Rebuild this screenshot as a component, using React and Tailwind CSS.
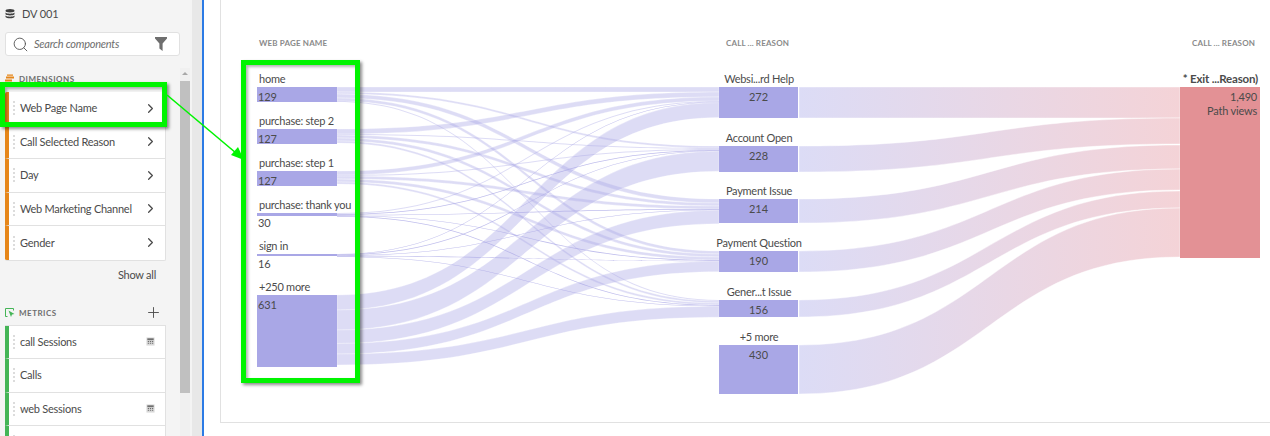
import { ChevronRight, Plus, Search } from 'lucide-react';

const FONT = { fontFamily: 'Lato, "Noto Sans", sans-serif' };

const dimensions = ['Web Page Name', 'Call Selected Reason', 'Day', 'Web Marketing Channel', 'Gender'];
const metrics = [
  { label: 'call Sessions', calc: true },
  { label: 'Calls', calc: false },
  { label: 'web Sessions', calc: true },
  { label: '', calc: false },
];

const leftNodes = [
  { label: 'home', value: '129', top: 87, h: 15 },
  { label: 'purchase: step 2', value: '127', top: 129, h: 15 },
  { label: 'purchase: step 1', value: '127', top: 171, h: 15 },
  { label: 'purchase: thank you', value: '30', top: 213, h: 3 },
  { label: 'sign in', value: '16', top: 254, h: 2 },
  { label: '+250 more', value: '631', top: 295, h: 72 },
];

const midNodes = [
  { label: 'Websi...rd Help', value: '272', top: 87, h: 31, exitTop: 87 },
  { label: 'Account Open', value: '228', top: 146, h: 26, exitTop: 118 },
  { label: 'Payment Issue', value: '214', top: 199, h: 24, exitTop: 145 },
  { label: 'Payment Question', value: '190', top: 251, h: 21, exitTop: 169 },
  { label: 'Gener...t Issue', value: '156', top: 300, h: 17, exitTop: 191 },
  { label: '+5 more', value: '430', top: 345, h: 49, exitTop: 208 },
];

// band widths: one row per left node, one column per middle node
const matrix = [
  [5, 2, 4, 3, 1],
  [5, 1, 3, 3, 2],
  [4, 1, 3, 3, 2],
  [1, 0.7, 0.7, 0.7, 0.7],
  [0.6, 0.6, 0.6, 0.6, 0.6],
  [15, 20, 13.5, 10.5, 11],
];

function band(x0, y0, x1, y1, w) {
  const c = (x0 + x1) / 2;
  return `M${x0} ${y0} C${c} ${y0} ${c} ${y1} ${x1} ${y1} L${x1} ${y1 + w} C${c} ${y1 + w} ${c} ${y0 + w} ${x0} ${y0 + w} Z`;
}

function buildLinks() {
  const targetOffset = [0, 0, 0, 0, 0];
  const links = [];
  matrix.forEach((row, s) => {
    let sourceOffset = 0;
    row.forEach((w, t) => {
      links.push({ s, t, w, y0: leftNodes[s].top + sourceOffset, y1: midNodes[t].top + targetOffset[t] });
      sourceOffset += w;
      targetOffset[t] += w;
    });
  });
  return links;
}

function DragDots() {
  return <span className="mr-[5px] h-[14px] w-[2px] shrink-0 border-l-2 border-dotted border-[#dcdcdc]" />;
}

function CalcIcon() {
  return (
    <svg width="9" height="9" viewBox="0 0 10 10" className="shrink-0">
      <rect x="0.5" y="0.5" width="9" height="9" fill="#d8d8d8" />
      <rect x="1.5" y="1.5" width="7" height="2" fill="#6e6e6e" />
      <path d="M2 5h1.4M4.3 5h1.4M6.6 5h1.4M2 7h1.4M4.3 7h1.4M6.6 7h1.4" stroke="#6e6e6e" strokeWidth="1.2" />
    </svg>
  );
}

function SideRow({ label, tone, right, last }) {
  return (
    <div className={`flex h-[33.5px] items-center bg-white pl-[4px] ${tone} border-l-4 ${last ? '' : 'border-b border-b-[#e1e1e1]'}`}>
      <DragDots />
      <span className="flex-1 whitespace-nowrap text-[11px] tracking-[-0.25px] text-[#4b4b4b]">{label}</span>
      <span className="flex w-[30px] justify-center">{right}</span>
    </div>
  );
}

function Sidebar() {
  return (
    <aside className="flex h-full w-[192px] shrink-0 bg-[#f4f4f4]">
      <div className="w-[180px] shrink-0 pl-[5px]">
        <div className="flex h-[28px] items-center">
          <svg width="10" height="10" viewBox="0 0 10 10" className="mr-[7px]">
            <ellipse cx="5" cy="1.8" rx="4.5" ry="1.7" fill="#3f3f3f" />
            <path d="M0.5 3.6c1 1.6 8 1.6 9 0v1.6c-1 1.6-8 1.6-9 0zM0.5 6.6c1 1.6 8 1.6 9 0v1.4c-1 1.8-8 1.8-9 0z" fill="#3f3f3f" />
          </svg>
          <span className="text-[11px] tracking-[-0.1px] text-[#4b4b4b]">DV 001</span>
        </div>
        <div className="mt-[4px] flex h-[24px] w-[175px] items-center rounded-[3px] border border-[#e1e1e1] bg-white pl-[6px] pr-[12px]">
          <Search size={17} strokeWidth={1.3} className="text-[#555]" />
          <span className="ml-[5px] flex-1 text-[11px] italic tracking-[-0.25px] text-[#6e6e6e]">Search components</span>
          <svg width="12" height="14" viewBox="0 0 12 14">
            <path d="M0 0h12v1.6L7.6 6.4V14L4.4 11.6V6.4L0 1.6z" fill="#6e6e6e" />
          </svg>
        </div>
        <div className="mt-[17px] flex h-[12px] items-center">
          <svg width="10" height="10" viewBox="0 0 10 10" className="mr-[4px]">
            <path d="M1 2.5h8v2H1zM0 5.5h7v2H0zM2 0.5h6v1.2H2z" fill="#e68619" />
          </svg>
          <span className="text-[8px] font-bold tracking-[0.5px] text-[#6e6e6e]">DIMENSIONS</span>
        </div>
        <div className="mt-[7px] w-[161px] overflow-hidden rounded-[2px] border-b border-r border-[#e1e1e1]">
          {dimensions.map((d, i) => (
            <SideRow
              key={d}
              label={d}
              tone="border-l-[#e68619]"
              last={i === dimensions.length - 1}
              right={<ChevronRight size={15} strokeWidth={2} className="text-[#4b4b4b]" />}
            />
          ))}
        </div>
        <div className="mt-[6px] w-[151px] text-right text-[11px] leading-[16px] tracking-[-0.25px] text-[#4b4b4b]">Show all</div>
        <div className="mt-[24px] flex h-[12px] w-[157px] items-center">
          <svg width="10" height="10" viewBox="0 0 10 10" className="mr-[4px]">
            <path d="M0.5 0.5h8v2M0.5 0.5v8h2" fill="none" stroke="#44b556" />
            <path d="M3.5 2.5l6 3.5-2.5.6-1 2.4z" fill="#44b556" />
          </svg>
          <span className="flex-1 text-[8px] font-bold tracking-[0.5px] text-[#6e6e6e]">METRICS</span>
          <Plus size={17} strokeWidth={1.3} className="text-[#4b4b4b]" />
        </div>
        <div className="mt-[6px] w-[161px] border-r border-t border-[#e1e1e1]">
          {metrics.map((m) => (
            <SideRow key={m.label || 'next'} label={m.label} tone="border-l-[#44b556]" right={m.calc ? <CalcIcon /> : null} />
          ))}
        </div>
      </div>
      <div className="flex flex-1 flex-col pt-[68px]">
        <div className="h-[13px] w-[10px] bg-[#f0f0f0] pt-[4px]">
          <div className="mx-auto h-0 w-0 border-x-[3.5px] border-b-[3px] border-x-transparent border-b-[#a8a8a8]" />
        </div>
        <div className="h-[312px] w-[10px] bg-[#c0c0c0]" />
        <div className="w-[10px] flex-1 bg-[#f0f0f0]" />
      </div>
    </aside>
  );
}

function ColumnTitle({ x, children }) {
  return (
    <div className="absolute top-[37px] whitespace-nowrap text-[8px] font-bold leading-[12px] tracking-[0.15px] text-[#8a8a8a]" style={{ left: x - 221 }}>
      {children}
    </div>
  );
}

function Node({ node, left }) {
  return (
    <>
      <div className="absolute h-[14px] whitespace-nowrap text-[11px] leading-[14px] tracking-[-0.25px] text-[#4b4b4b]" style={{ left: left ? 38 : 498 - 30, width: left ? undefined : 140, top: node.top - 15, textAlign: left ? 'left' : 'center' }}>
        {node.label}
      </div>
      <div className="absolute bg-[#a9a7e6]" style={{ left: left ? 36 : 498, width: left ? 80 : 79, top: node.top, height: node.h }} />
      <div className="absolute text-[11px] leading-[14px] tracking-[-0.1px] text-[#4b4b4b]" style={{ left: left ? 37 : 498, width: left ? undefined : 79, top: node.top + 3, textAlign: left ? 'left' : 'center' }}>
        {node.value}
      </div>
    </>
  );
}

function Sankey() {
  const links = buildLinks();
  return (
    <div className="relative h-full w-full border-b border-l border-[#e1e1e1]">
      <svg className="absolute left-0 top-0" width="1049" height="420" viewBox="221 0 1049 420">
        <defs>
          <linearGradient id="exit" gradientUnits="userSpaceOnUse" x1="799" x2="1180" y1="0" y2="0">
            <stop offset="0" stopColor="#dcdcf6" />
            <stop offset="1" stopColor="#f4d3d7" />
          </linearGradient>
        </defs>
        {links.map((l) => (
          <path
            key={`${l.s}-${l.t}`}
            d={band(337, l.y0, 719, l.y1, l.w)}
            fill="#a9a7e6"
            fillOpacity={l.w < 1 ? 0.75 : 0.4}
            stroke="#ffffff"
            strokeOpacity={l.w >= 2 ? 0.5 : 0}
            strokeWidth="0.6"
          />
        ))}
        {midNodes.map((n) => (
          <path key={n.label} d={band(799, n.top, 1180, n.exitTop, n.h)} fill="url(#exit)" stroke="#ffffff" strokeOpacity="0.7" strokeWidth="0.6" />
        ))}
      </svg>

      <ColumnTitle x={259}>WEB PAGE NAME</ColumnTitle>
      <ColumnTitle x={726}>CALL ... REASON</ColumnTitle>
      <ColumnTitle x={1192}>CALL ... REASON</ColumnTitle>

      {leftNodes.map((n) => (
        <Node key={n.label} node={n} left />
      ))}
      {midNodes.map((n) => (
        <Node key={n.label} node={n} />
      ))}

      <div className="absolute left-[959px] top-[87px] h-[171px] w-[80px] bg-[#e39195] pr-[3px] pt-[3px] text-right text-[11px] leading-[14px] tracking-[-0.2px] text-[#4b4b4b]">
        <div>1,490</div>
        <div>Path views</div>
      </div>
      <div className="absolute right-[12px] top-[72px] whitespace-nowrap text-[11.5px] font-bold leading-[14px] tracking-[-0.2px] text-[#4b4b4b]">* Exit ...Reason)</div>
    </div>
  );
}

export default function App() {
  return (
    <div className="relative flex h-[436px] w-[1270px] overflow-hidden bg-white" style={FONT}>
      <Sidebar />
      <div className="h-full w-[10px] shrink-0 bg-[#e8e8e8]" />
      <main className="h-full flex-1 border-l-2 border-[#2c7be5] pb-[13px] pl-[16px]">
        <Sankey />
      </main>

      {/* callouts drawn over the screenshot */}
      <div className="absolute left-0 top-[82px] h-[45px] w-[167px] border-[5px] border-[#00f400] shadow-[2px_2px_3px_rgba(0,0,0,0.45),inset_2px_2px_3px_rgba(0,0,0,0.3)]" />
      <div className="absolute left-[241px] top-[60px] h-[323px] w-[119px] border-[5px] border-[#00f400] shadow-[2px_2px_3px_rgba(0,0,0,0.45),inset_2px_2px_3px_rgba(0,0,0,0.3)]" />
      <svg className="absolute left-[160px] top-[90px]" width="90" height="80" viewBox="160 90 90 80">
        <path d="M167 95L236 153" stroke="#00f400" strokeWidth="1.6" />
        <path d="M244 160L231 155L238 147Z" fill="#00f400" />
      </svg>
    </div>
  );
}
